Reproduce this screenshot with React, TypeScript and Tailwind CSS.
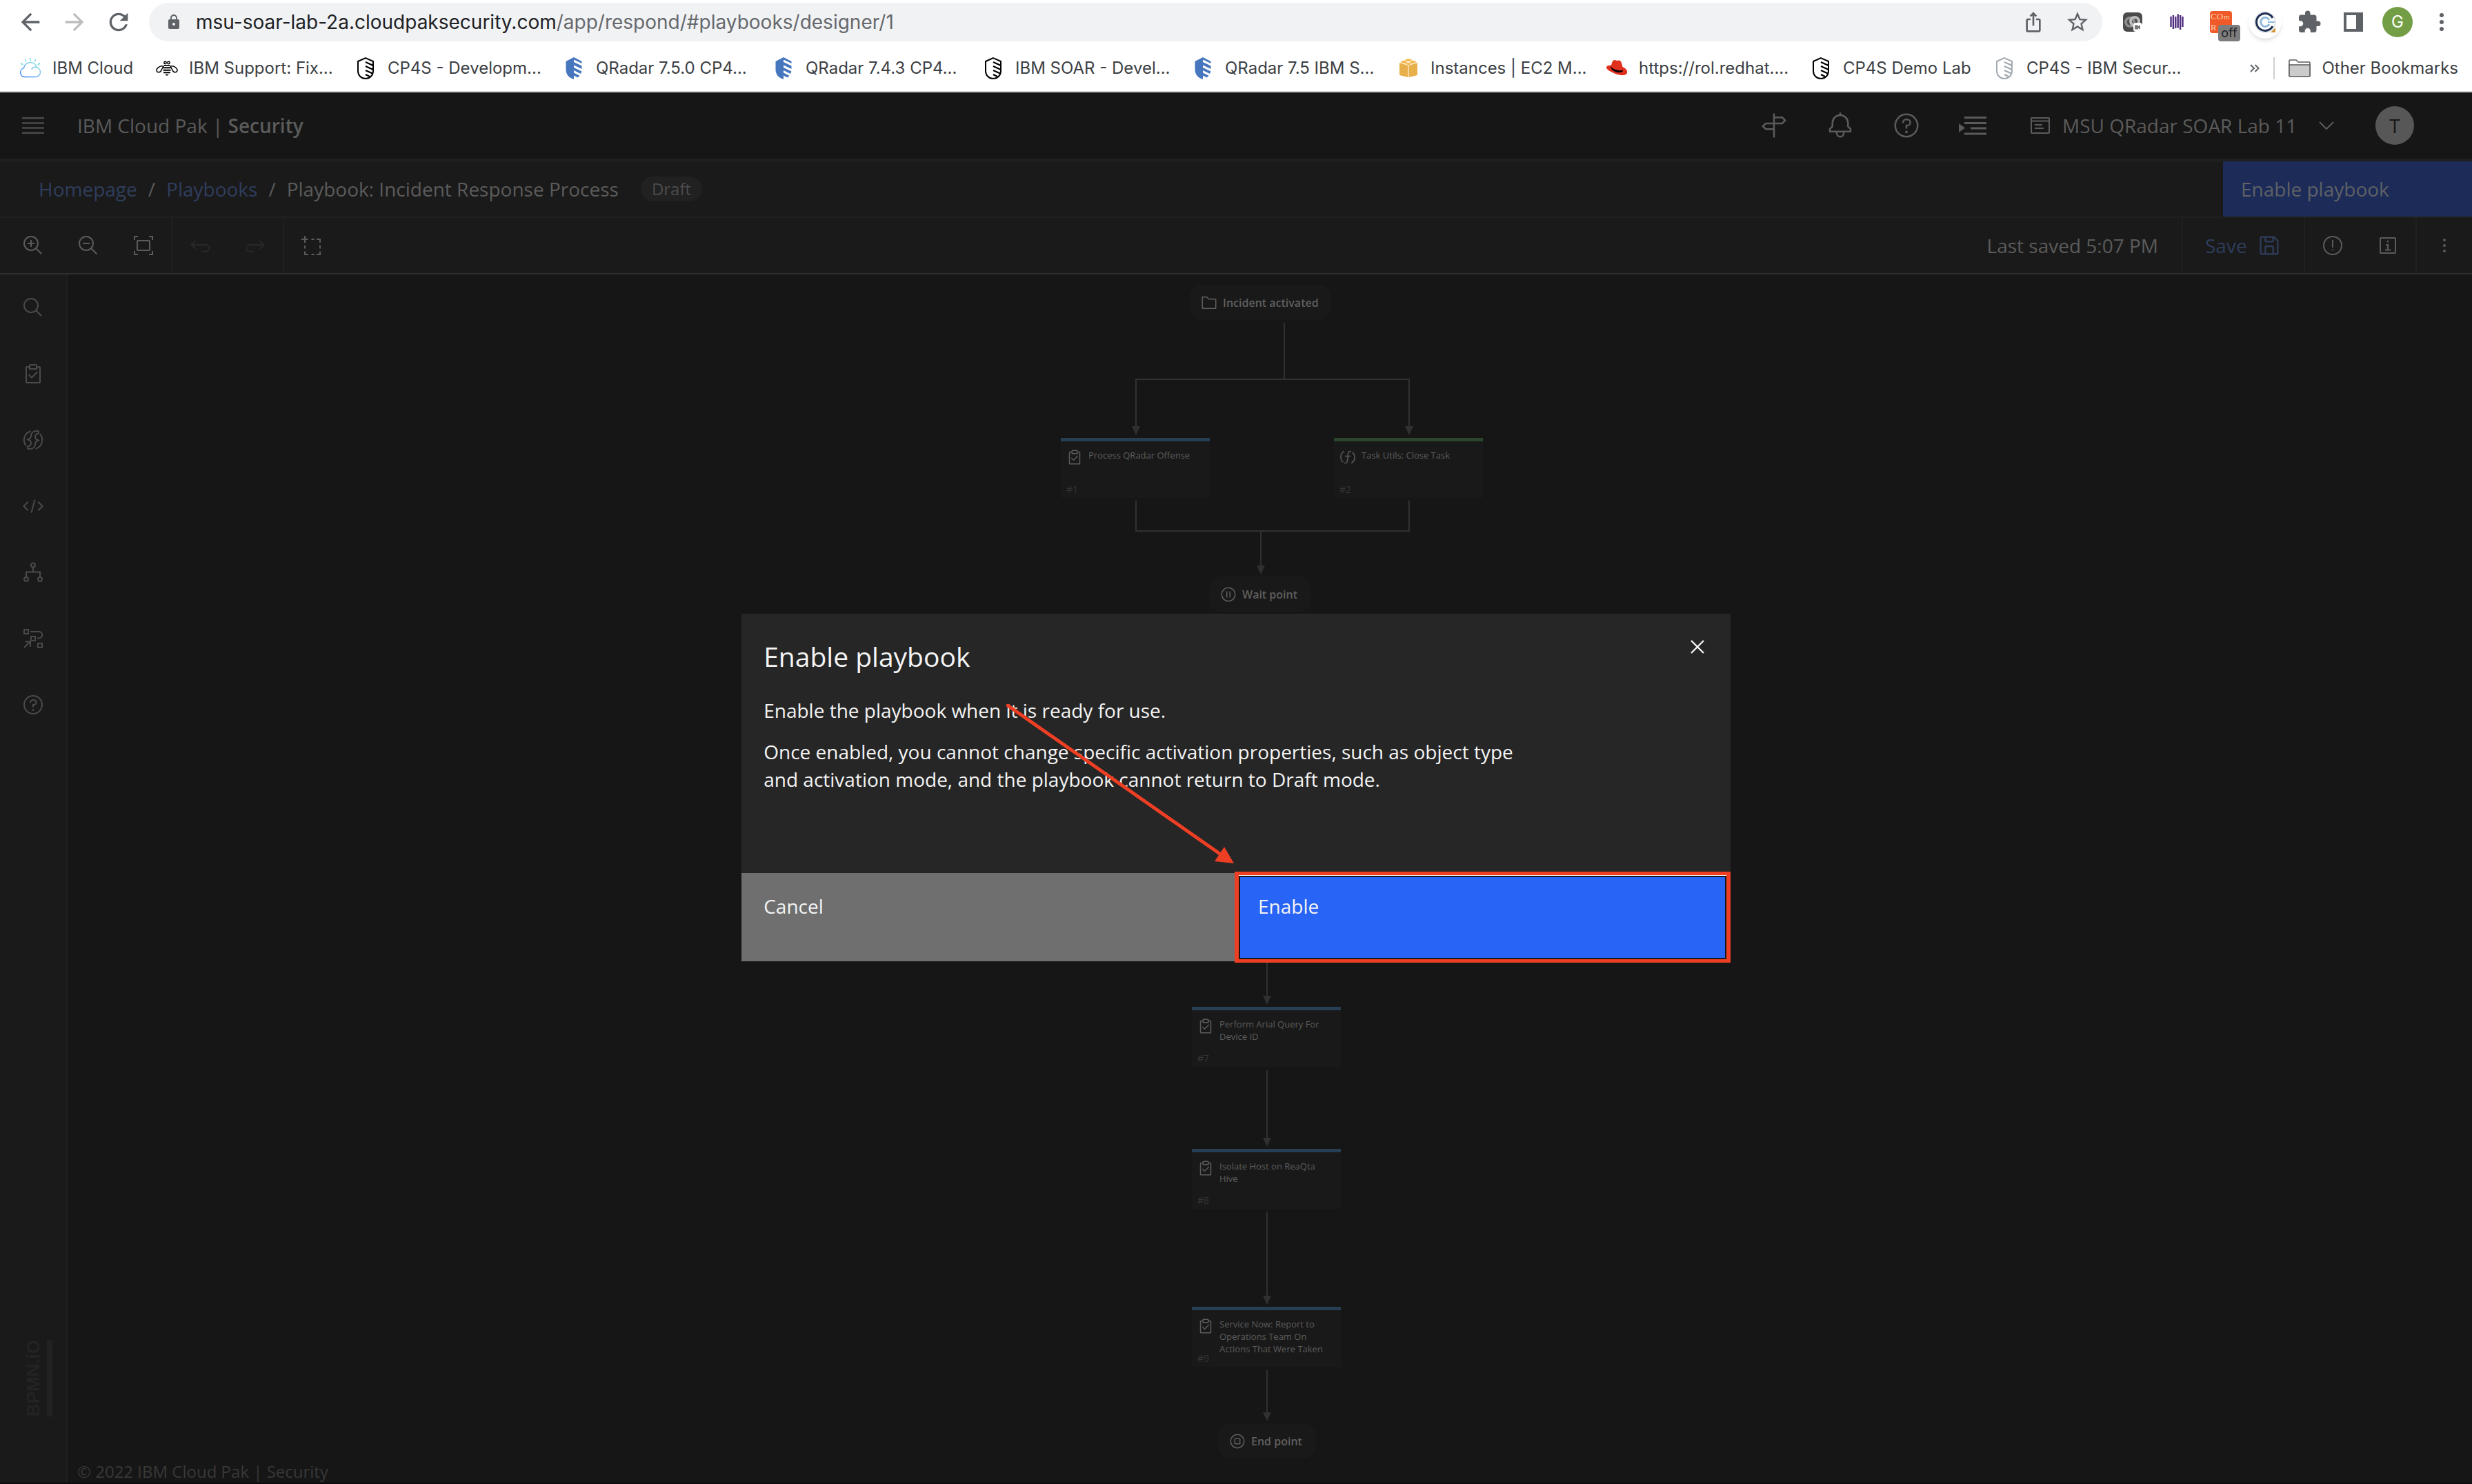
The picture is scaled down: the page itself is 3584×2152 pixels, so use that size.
import React from "react";
import {
  MdArrowBack,
  MdArrowForward,
  MdExtension,
  MdIosShare,
  MdLock,
  MdRefresh,
  MdStarBorder,
} from "react-icons/md";

/* ---------- Icons ---------- */

type IconProps = { className?: string; children?: React.ReactNode; box?: string };

function Solid({ className = "size-8", children, box = "0 0 32 32" }: IconProps) {
  return (
    <svg viewBox={box} fill="currentColor" className={className} aria-hidden="true">
      {children}
    </svg>
  );
}

function Line({ className = "size-8", children, box = "0 0 32 32" }: IconProps) {
  return (
    <svg viewBox={box} fill="none" stroke="currentColor" strokeWidth="2" className={className} aria-hidden="true">
      {children}
    </svg>
  );
}

const SearchIcon = () => (
  <Solid>
    <path d="M29,27.586l-7.552-7.552a11.018,11.018,0,1,0-1.414,1.414L27.586,29ZM4,13a9,9,0,1,1,9,9A9.01,9.01,0,0,1,4,13Z" />
  </Solid>
);

const ZoomIcon = ({ plus }: { plus?: boolean }) => (
  <Solid>
    <path d={plus ? "M18 12h-4V8h-2v4H8v2h4v4h2v-4h4z" : "M8 12h10v2H8z"} />
    <path d="M21.448,20A10.856,10.856,0,0,0,24,13,11,11,0,1,0,13,24a10.856,10.856,0,0,0,7-2.552L27.586,29,29,27.586ZM13,22a9,9,0,1,1,9-9A9.01,9.01,0,0,1,13,22Z" />
  </Solid>
);

const FitIcon = () => (
  <Line>
    <rect x="7" y="9" width="18" height="14" rx="1" />
    <path d="M3 8V3h5M24 3h5v5M29 24v5h-5M8 29H3v-5" />
  </Line>
);

const UndoIcon = ({ className = "size-8" }: { className?: string }) => (
  <Line className={className}>
    <path d="M4 15h20.500a4.800 4.800 0 0 1 0 9.700H18M9.500 9l-6 6 6 6" />
  </Line>
);

const MarqueeIcon = () => (
  <Line>
    <path d="M6 2v10M1 7h9.500M15.500 7h4M23 7h5v5M28 16v4.500M28 24.500V29h-5M19.500 29h-4M11 29H6v-4.500M6 20.500V16" />
  </Line>
);

const TaskIcon = ({ className = "size-8" }: { className?: string }) => (
  <Solid className={className}>
    <path d="M14,20.180l-3.590-3.590L9,18l5,5,9-9-1.410-1.420Z" />
    <path d="M25,5H22V4a2,2,0,0,0-2-2H12a2,2,0,0,0-2,2V5H7A2,2,0,0,0,5,7V28a2,2,0,0,0,2,2H25a2,2,0,0,0,2-2V7A2,2,0,0,0,25,5ZM12,4h8V8H12ZM25,28H7V7h3v3H22V7h3Z" />
  </Solid>
);

const FunctionsIcon = () => (
  <Line>
    <path d="M12.500 3.200A13.200 13.200 0 0 0 6 24.500M19.500 28.800A13.200 13.200 0 0 0 26 7.500" />
    <path d="M24 3h-3c-5 0-8 3-8 7 0 2.500-1.500 4-4.500 5.500C11.500 16.500 13 17.500 13 20c0 3-1.500 5-5 5.500V29" />
    <path d="M8 29h3c5 0 8-3 8-7 0-2.500 1.500-4 4.500-5.500C20.500 15.500 19 14.500 19 12c0-3 1.500-5 5-5.500V3" />
  </Line>
);

const FunctionIcon = ({ className }: { className: string }) => (
  <Line className={className}>
    <path d="M9 4.500a13 13 0 0 0-2 21M23 27.500a13 13 0 0 0 2-21M22.500 5H20a3 3 0 0 0-3 2.700l-2 17a3 3 0 0 1-3 2.600H9.500M11 14h10" />
  </Line>
);

const CodeIcon = () => (
  <Line>
    <path d="M23.300 9.700 29.600 16l-6.300 6.300M8.700 9.700 2.400 16l6.300 6.300M18.600 6.500l-5.200 19" />
  </Line>
);

const BranchIcon = () => (
  <Line>
    <circle cx="16" cy="5.500" r="3" />
    <circle cx="6" cy="26" r="3" />
    <circle cx="26" cy="26" r="3" />
    <path d="M16 8.500V15M6 23v-7.500h20V23" />
  </Line>
);

const FlowIcon = () => (
  <Line>
    <path d="M3 3h6v6H3zM13 13h6v6h-6zM23 23h6v6h-6zM12 6h12.500a4.700 4.700 0 0 1 0 9.500H22M3 29l9-8.500M4.500 20.500H12V28" />
  </Line>
);

const HelpIcon = ({ className = "size-8" }: { className?: string }) => (
  <Solid className={className}>
    <path d="M16,2A14,14,0,1,0,30,16,14,14,0,0,0,16,2Zm0,26A12,12,0,1,1,28,16,12,12,0,0,1,16,28Z" />
    <circle cx="16" cy="23.500" r="1.500" />
    <path d="M17,8H15.500A4.490,4.490,0,0,0,11,12.500V13h2v-.5A2.500,2.500,0,0,1,15.500,10H17a2.500,2.500,0,0,1,0,5H15v4.500h2V17a4.500,4.500,0,0,0,0-9Z" />
  </Solid>
);

const SignpostIcon = () => (
  <Line className="size-10">
    <path d="M16 2v28M16 6.500h9.500l3.500 3.500-3.500 3.500H6.500L3 16.800l3.500 3.400H16" />
  </Line>
);

const BellIcon = () => (
  <Solid className="size-10">
    <path d="M28.707,19.293,26,16.586V13a10.014,10.014,0,0,0-9-9.949V1H15V3.051A10.014,10.014,0,0,0,6,13v3.586L3.293,19.293A1,1,0,0,0,3,20v3a1,1,0,0,0,1,1h7v.777a5.152,5.152,0,0,0,4.500,5.199A5.006,5.006,0,0,0,21,25V24h7a1,1,0,0,0,1-1V20A1,1,0,0,0,28.707,19.293ZM19,25a3,3,0,0,1-6,0V24h6Zm8-3H5V20.414L7.707,17.707A1,1,0,0,0,8,17V13a8,8,0,0,1,16,0v4a1,1,0,0,0,.293.707L27,20.414Z" />
  </Solid>
);

const ActivityIcon = () => (
  <Solid className="size-10" box="0 0 40 40">
    <path d="M8 7h32v3H8zM8 15h32v3H8zM17 22.500h23v3H17zM8 30.500h32v3H8zM0 17l9 6.500L0 30z" />
  </Solid>
);

const AccountIcon = () => (
  <Line className="h-6 w-7" box="0 0 28 24">
    <rect x="1" y="1" width="26" height="22" rx="1" />
    <path d="M1 5.500h26M6 11h11M6 16h13" />
  </Line>
);

const SaveIcon = () => (
  <Solid className="size-9">
    <path d="M27.710,9.290l-5-5A1,1,0,0,0,22,4H6A2,2,0,0,0,4,6V26a2,2,0,0,0,2,2H26a2,2,0,0,0,2-2V10A1,1,0,0,0,27.710,9.290ZM12,6h8v4H12Zm8,20H12V18h8Zm2,0V18a2,2,0,0,0-2-2H12a2,2,0,0,0-2,2v8H6V6h4v4a2,2,0,0,0,2,2h8a2,2,0,0,0,2-2V6.410l4,4V26Z" />
  </Solid>
);

const WarningIcon = () => (
  <Line>
    <circle cx="16" cy="16" r="13" />
    <path d="M16 8v11" />
    <circle cx="16" cy="22.500" r="1" fill="currentColor" stroke="none" />
  </Line>
);

const InfoIcon = () => (
  <Line>
    <rect x="5" y="5" width="22" height="22" rx="1" />
    <path d="M13 15h3v7M12 22.500h8" />
    <circle cx="16" cy="10" r="1.500" fill="currentColor" stroke="none" />
  </Line>
);

const DotsIcon = ({ className, r }: { className: string; r: number }) => (
  <Solid className={className}>
    <circle cx="16" cy="8" r={r} />
    <circle cx="16" cy="16" r={r} />
    <circle cx="16" cy="24" r={r} />
  </Solid>
);

const FolderIcon = ({ className }: { className: string }) => (
  <Line className={className}>
    <path d="M3 5h8.500l4 4H28a1 1 0 0 1 1 1v16a1 1 0 0 1-1 1H4a1 1 0 0 1-1-1z" />
  </Line>
);

const PauseIcon = ({ className }: { className: string }) => (
  <Line className={className}>
    <circle cx="16" cy="16" r="13" />
    <path d="M13 10v12M19 10v12" />
  </Line>
);

const StopIcon = ({ className }: { className: string }) => (
  <Line className={className}>
    <circle cx="16" cy="16" r="13" />
    <rect x="11" y="11" width="10" height="10" rx="1" />
  </Line>
);

/* ---------- Bookmark favicons ---------- */

const OutlineShield = ({ muted }: { muted?: boolean }) => (
  <svg viewBox="0 0 32 32" fill="none" stroke={muted ? "#a2a9b0" : "#000"} strokeWidth="2" className="size-8" aria-hidden="true">
    <path d="M16 1.200 27 6v14c0 6-4.500 11-11 11S5 26 5 20V6z" />
    <path d="M16 7l11 5M16 13l11 5M16 19l10 4.500M16 25l6 3" strokeWidth="2.400" />
  </svg>
);

const BlueShield = () => (
  <svg viewBox="0 0 32 32" className="size-8" aria-hidden="true">
    <path d="M16 0v32C9 30 4.500 25 4.500 18V6z" fill="#4676bd" />
    <path
      d="M16 0l11.500 6v3L16 3.500zM16 7l11.500 5.500V17L16 11.500zM16 15l11.500 5.500L26 24l-10-5zM16 22.500l8.500 4.200-3 2.800-5.500-3z"
      fill="#4676bd"
    />
  </svg>
);

const CloudFavicon = () => (
  <svg viewBox="0 0 32 32" fill="none" strokeWidth="1.500" strokeLinecap="round" className="size-8" aria-hidden="true">
    <defs>
      <linearGradient id="sky" x1="0" y1="1" x2="1" y2="0">
        <stop offset="0" stopColor="#3b7cff" />
        <stop offset=".6" stopColor="#7cc4ef" />
        <stop offset="1" stopColor="#8ff0e0" />
      </linearGradient>
    </defs>
    <path d="M8 28.500a6.500 6.500 0 0 1-1.500-12.800C7 11 11 7.500 16 7.500c5 0 8.500 3.500 9.300 7.500 3 .5 5.200 3.200 5.200 6.500 0 4-3 7-7 7zM18 17c2-3 5-3 7-2" stroke="url(#sky)" />
    <path d="M16 1.500v3M8.500 3.500l1.200 2.500M23.500 3.500 22.300 6M2.500 9l2.300 1.500M29.500 9l-2.300 1.500" stroke="#74dce4" />
  </svg>
);

const BeeFavicon = () => (
  <svg viewBox="0 0 32 32" className="size-8" aria-hidden="true">
    <g fill="none" stroke="#000" strokeWidth="1.500">
      <circle cx="13.500" cy="8" r="1.700" />
      <circle cx="18.500" cy="8" r="1.700" />
      <path d="M11 13C6 12 1 15.500 1 19c0 4 6 3.500 7-.5zM21 13c5-1 10 2.500 10 6 0 4-6 3.500-7-.5z" />
    </g>
    <path d="M12 11h8v1.800h-8zM10.500 14.200h11v2h-11zM10.500 17.700h11v2h-11zM11 21.200h10v2H11zM13 24.700h6L16 27z" fill="#000" />
  </svg>
);

const BoxFavicon = () => (
  <svg viewBox="0 0 32 32" className="size-8" aria-hidden="true">
    <path d="M3 8l12.500 4v17L3 26zM29 8l-12.500 4v17L29 26z" fill="#e8b04a" />
    <path d="M16 2l6 2-6 2.200L10 4zM9 4.500 15 7l-4 2.500L4 7zM23 4.500 17 7l4 2.500L28 7zM16 7.500l4.500 2.200L16 11.500l-4.500-1.800z" fill="#f2b84b" />
  </svg>
);

const HatFavicon = () => (
  <svg viewBox="0 0 32 32" className="size-8" aria-hidden="true">
    <path d="M8 12c1-5 2.500-8 5-8 1.500 0 2 1 3.500 1s2-.8 3.500-.3c2.500.8 3.500 4.800 4.500 9.300 4 1.500 7.500 5 6.500 8.500-1 4-8 4.500-14 2.500S.5 18.500 1 14.500C1.300 12.300 4.500 11.500 8 12z" fill="#e0301e" />
    <path d="M7.800 12.500c-.5 2 3 4.500 8 6 4 1.200 8 1 8.800-.5l.2 2c-1 2.500-6 2.500-10 1.200-5-1.700-8.500-5-7-8.700z" fill="#000" />
  </svg>
);

/* ---------- Browser chrome ---------- */

const bookmarks: { label: string; width: string; icon: React.ReactNode }[] = [
  { label: "IBM Cloud", width: "w-[198px]", icon: <CloudFavicon /> },
  { label: "IBM Support: Fix...", width: "w-[288px]", icon: <BeeFavicon /> },
  { label: "CP4S - Developm...", width: "w-[302px]", icon: <OutlineShield /> },
  { label: "QRadar 7.5.0 CP4...", width: "w-[304px]", icon: <BlueShield /> },
  { label: "QRadar 7.4.3 CP4...", width: "w-[304px]", icon: <BlueShield /> },
  { label: "IBM SOAR - Devel...", width: "w-[304px]", icon: <OutlineShield /> },
  { label: "QRadar 7.5 IBM S...", width: "w-[298px]", icon: <BlueShield /> },
  { label: "Instances | EC2 M...", width: "w-[302px]", icon: <BoxFavicon /> },
  { label: "https://rol.redhat....", width: "w-[296px]", icon: <HatFavicon /> },
  { label: "CP4S Demo Lab", width: "w-[266px]", icon: <OutlineShield /> },
  { label: "CP4S - IBM Secur...", width: "w-[280px]", icon: <OutlineShield muted /> },
];

function ExtensionButton({ label, children }: { label: string; children: React.ReactNode }) {
  return (
    <button type="button" aria-label={label} className="relative flex h-16 w-16 items-center justify-center">
      {children}
    </button>
  );
}

function BrowserChrome() {
  return (
    <div className="border-b-2 border-[#d3d3d3] bg-white font-['Inter',sans-serif]">
      <div className="flex h-16 items-center pr-3">
        <button type="button" aria-label="Back" className="ml-3 flex size-16 items-center justify-center text-[#5f6368]">
          <MdArrowBack className="size-10" />
        </button>
        <button type="button" aria-label="Forward" className="flex size-16 items-center justify-center text-[#bdbdbd]">
          <MdArrowForward className="size-10" />
        </button>
        <button type="button" aria-label="Reload" className="flex size-16 items-center justify-center text-[#5f6368]">
          <MdRefresh className="size-10" />
        </button>
        <div className="ml-3 flex h-14 flex-1 items-center rounded-full bg-[#f1f2f4] pr-1 pl-6 text-[#5f6368]">
          <MdLock className="size-6" />
          <div
            role="textbox"
            aria-label="Address and search bar"
            contentEditable
            suppressContentEditableWarning
            spellCheck={false}
            className="ml-5 flex-1 text-[28px] leading-10 whitespace-nowrap text-[#66696d]"
          >
            <span className="text-[#202124]">msu-soar-lab-2a.cloudpaksecurity.com</span>
            /app/respond/#playbooks/designer/1
          </div>
          <button type="button" aria-label="Share this page" className="flex w-16 justify-center">
            <MdIosShare className="size-8" />
          </button>
          <button type="button" aria-label="Bookmark this page" className="flex w-16 justify-center">
            <MdStarBorder className="size-9" />
          </button>
        </div>
        <div className="ml-3 flex items-center text-[#5f6368]">
          <ExtensionButton label="Screen recorder">
            <svg viewBox="0 0 28 28" className="size-7" aria-hidden="true">
              <rect width="28" height="28" rx="6" fill="#4b4b4b" />
              <circle cx="10" cy="14" r="6" fill="none" stroke="#8d8d8d" strokeWidth="4" />
              <circle cx="17" cy="13" r="6" fill="none" stroke="#bdbdbd" strokeWidth="4" />
              <rect x="15" y="15" width="13" height="13" rx="4" fill="#fff" />
              <path d="M17 18.500h5v1.500l3-1.500v6L22 23v1.500h-5z" fill="#777" />
            </svg>
          </ExtensionButton>
          <ExtensionButton label="Audio tool">
            <svg viewBox="0 0 20 24" className="h-6 w-5" stroke="#4f2d7f" strokeWidth="2.400" aria-hidden="true">
              <path d="M1.500 4v15M4.900 2v20M8.300 4v17M11.700 .5v20M15.100 2v21M18.500 4v15" />
            </svg>
          </ExtensionButton>
          <ExtensionButton label="Comcor, off">
            <span className="flex size-8 flex-col rounded-sm bg-[#f05a28] text-left font-['Liberation_Serif',serif] text-[#ffd2b5]">
              <span className="flex h-4 items-center gap-px pl-px text-[13px] leading-4">
                CO<span className="text-[11px] leading-3">m</span>
              </span>
              <span className="pl-px text-[13px] leading-4">R</span>
            </span>
            <span className="absolute right-1 bottom-1 flex h-6 w-8 items-center justify-center rounded bg-[#7d7d7d] text-[18px] leading-6 text-[#202124]">
              off
            </span>
          </ExtensionButton>
          <ExtensionButton label="C extension">
            <span className="flex size-12 items-center justify-center rounded-full bg-white shadow-md">
              <svg viewBox="0 0 32 32" className="size-8" fill="none" aria-hidden="true">
                <circle cx="16" cy="16" r="15" stroke="#c9ced6" />
                <path d="M27 10a12.500 12.500 0 1 0 0 12" stroke="#1d2f52" strokeWidth="3" />
                <path d="M22 13a6.500 6.500 0 1 0 0 6" stroke="#8fb8dc" strokeWidth="3" />
                <path d="M20 16h10" stroke="#8fb8dc" strokeWidth="2" />
                <path d="M31 24v7h-7z" fill="#c9973a" />
              </svg>
            </span>
          </ExtensionButton>
          <ExtensionButton label="Extensions">
            <MdExtension className="size-9" />
          </ExtensionButton>
          <ExtensionButton label="Side panel">
            <svg viewBox="0 0 28 28" className="size-7" fill="currentColor" aria-hidden="true">
              <path fillRule="evenodd" d="M0 0h28v28H0zM4 4v20h14V4z" />
            </svg>
          </ExtensionButton>
          <ExtensionButton label="Profile G">
            <span className="flex size-11 items-center justify-center rounded-full bg-[#739e46] text-[24px] leading-8 text-white">G</span>
          </ExtensionButton>
          <ExtensionButton label="Browser menu">
            <DotsIcon className="size-10" r={2.4} />
          </ExtensionButton>
        </div>
      </div>
      <nav aria-label="Bookmarks" className="flex h-[68px] items-center overflow-hidden pt-0.5 pl-7 text-[24px] leading-8 text-[#3c4043]">
        {bookmarks.map((b) => (
          <a key={b.label} href="#bookmark" className={`flex shrink-0 items-center gap-4 whitespace-nowrap ${b.width}`}>
            {b.icon}
            {b.label}
          </a>
        ))}
        <button type="button" aria-label="More bookmarks" className="ml-auto px-5 text-[#5f6368]">
          <svg viewBox="0 0 14 12" className="h-3 w-3.5" fill="none" stroke="currentColor" strokeWidth="2" aria-hidden="true">
            <path d="M1 1l5 5-5 5M7.500 1l5 5-5 5" />
          </svg>
        </button>
        <span className="h-8 w-0.5 bg-[#cfcfcf]" />
        <button type="button" className="mr-5 ml-5 flex items-center gap-4">
          <svg viewBox="0 0 32 32" className="size-8" stroke="#5a5a5a" strokeWidth="1.500" aria-hidden="true">
            <path d="M1 27V5a1 1 0 0 1 1-1h9l3 3h16a1 1 0 0 1 1 1v19z" fill="#fff" />
            <path d="M1 11h30v16a1 1 0 0 1-1 1H2a1 1 0 0 1-1-1z" fill="#cbcbcb" />
          </svg>
          Other Bookmarks
        </button>
      </nav>
    </div>
  );
}

/* ---------- Application header ---------- */

function HeaderButton({ label, children }: { label: string; children: React.ReactNode }) {
  return (
    <button type="button" aria-label={label} className="flex h-24 w-24 items-center justify-center">
      {children}
    </button>
  );
}

function AppHeader() {
  return (
    <header className="flex h-[100px] items-center border-b-4 border-[#1f1f1f] text-[28px] leading-10 text-[#5b5b5b]">
      <button type="button" aria-label="Open menu" className="flex size-24 items-center justify-center text-[#4a4a4a]">
        <Solid className="h-6 w-8" box="0 0 32 24">
          <path d="M0 0h32v2.500H0zM0 7.200h32v2.500H0zM0 14.300h32v2.500H0zM0 21.500h32V24H0z" />
        </Solid>
      </button>
      <a href="#home" className="pl-4">
        IBM Cloud Pak | <span className="font-semibold">Security</span>
      </a>
      <div className="ml-auto flex items-center">
        <HeaderButton label="Getting started"><SignpostIcon /></HeaderButton>
        <HeaderButton label="Notifications"><BellIcon /></HeaderButton>
        <HeaderButton label="Help"><HelpIcon className="size-10" /></HeaderButton>
        <HeaderButton label="Activity"><ActivityIcon /></HeaderButton>
        <button type="button" className="flex items-center pl-9">
          <AccountIcon />
          <span className="w-[390px] pl-[18px] text-left">MSU QRadar SOAR Lab 11</span>
          <Line className="h-3 w-[22px]" box="0 0 22 12">
            <path d="M1 1l10 10L21 1" />
          </Line>
        </button>
        <button type="button" aria-label="User T" className="mr-[84px] ml-[60px] flex size-14 items-center justify-center rounded-full bg-[#575757] text-[#161616]">
          T
        </button>
      </div>
    </header>
  );
}

function BreadcrumbBar() {
  return (
    <div className="flex h-[82px] items-stretch border-b-2 border-[#202020] bg-[#1a1a1a] text-[28px] leading-10 text-[#5b5b5b]">
      <nav aria-label="Breadcrumb" className="flex items-center gap-4 pl-14">
        <a href="#homepage" className="text-[#2f3d5c]">Homepage</a>
        <span>/</span>
        <a href="#playbooks" className="text-[#2f3d5c]">Playbooks</a>
        <span>/</span>
        <span>Playbook: Incident Response Process</span>
        <span className="ml-4 rounded-full bg-[#212121] px-4 text-[24px] leading-9 text-[#4c4c4c]">Draft</span>
      </nav>
      <button type="button" className="ml-auto w-[361px] bg-[#1c2b57] px-[26px] text-left text-[#5e6166]">Enable playbook</button>
    </div>
  );
}

function ToolButton({ label, muted, children }: { label: string; muted?: boolean; children: React.ReactNode }) {
  return (
    <button
      type="button"
      aria-label={label}
      disabled={muted}
      className={muted ? "flex h-20 w-20 items-center justify-center text-[#282828]" : "flex h-20 w-20 items-center justify-center"}
    >
      {children}
    </button>
  );
}

function Toolbar() {
  return (
    <div className="flex h-[82px] items-center border-b-2 border-[#2e2e2e] bg-[#1a1a1a] text-[28px] leading-10 text-[#5b5b5b]">
      <div className="flex border-r-2 border-[#202020] pl-2">
        <ToolButton label="Zoom in"><ZoomIcon plus /></ToolButton>
        <ToolButton label="Zoom out"><ZoomIcon /></ToolButton>
        <ToolButton label="Fit to screen"><FitIcon /></ToolButton>
      </div>
      <div className="flex border-r-2 border-[#202020]">
        <ToolButton label="Undo" muted><UndoIcon /></ToolButton>
        <ToolButton label="Redo" muted><UndoIcon className="size-8 -scale-x-100" /></ToolButton>
      </div>
      <ToolButton label="Select area"><MarqueeIcon /></ToolButton>
      <p className="ml-auto pr-[34px]">Last saved 5:07 PM</p>
      <button type="button" className="flex h-20 w-[179px] items-center gap-3.5 border-x-2 border-[#202020] pl-8 text-[#2f3d5c]">
        Save
        <SaveIcon />
      </button>
      <ToolButton label="Issues"><WarningIcon /></ToolButton>
      <ToolButton label="Details"><InfoIcon /></ToolButton>
      <div className="border-l-2 border-[#202020]">
        <ToolButton label="More options"><DotsIcon className="size-8" r={2} /></ToolButton>
      </div>
    </div>
  );
}

function SidePalette() {
  const tools: [string, React.ReactNode][] = [
    ["Search", <SearchIcon />],
    ["Tasks", <TaskIcon />],
    ["Functions", <FunctionsIcon />],
    ["Scripts", <CodeIcon />],
    ["Decision points", <BranchIcon />],
    ["Sub-playbooks", <FlowIcon />],
    ["Help", <HelpIcon />],
  ];
  return (
    <aside className="flex w-[98px] shrink-0 flex-col border-r-2 border-[#1f1f1f] bg-[#1a1a1a] text-[#4a4a4a]">
      {tools.map(([label, icon]) => (
        <button key={label} type="button" aria-label={label} className="flex h-24 items-center justify-center">
          {icon}
        </button>
      ))}
      <a
        href="#bpmn"
        className="mt-auto mb-24 ml-7 rotate-180 self-start border-l-8 border-[#222] font-['Liberation_Sans',sans-serif] text-[26px] leading-10 font-bold text-[#232323] [writing-mode:vertical-rl]"
      >
        BPMN.iO
      </a>
    </aside>
  );
}

/* ---------- Playbook diagram ---------- */

function PointNode({ place, icon, label }: { place: string; icon: React.ReactNode; label: string }) {
  return (
    <div className={`absolute flex h-[51px] items-center gap-2 rounded-[18px] bg-[#191919] px-4 text-[16px] leading-6 font-semibold whitespace-nowrap text-[#5f5f5f] ${place}`}>
      {icon}
      {label}
    </div>
  );
}

function StepNode({ place, accent, icon, label, id }: { place: string; accent: string; icon: React.ReactNode; label: string; id: string }) {
  return (
    <div className={`absolute flex h-[87px] w-[216px] gap-2 border-t-[5px] bg-[#191919] pt-[11px] pl-2 ${accent} ${place}`}>
      <span className="text-[#5c5c5c]">{icon}</span>
      <p className="w-[168px] text-[13px] leading-[18px] text-[#5c5c5c]">{label}</p>
      <span className="absolute bottom-1 left-2 text-[14px] leading-4 text-[#343434]">{id}</span>
    </div>
  );
}

function Diagram() {
  const task = <TaskIcon className="size-6" />;
  return (
    <div className="relative w-[616px]">
      <svg viewBox="0 0 616 1750" className="absolute top-0 left-0 h-[1750px] w-[616px]" fill="none" stroke="#303030" strokeWidth="2" aria-hidden="true">
        <path d="M329 70v82M114 222v-70h396v70M114 328v44h396v-44M295 372v52M304 990v58M304 1154v100M304 1360v124M304 1589v64" />
        <path
          d="M108 220h12l-6 13zM504 220h12l-6 13zM289 422h12l-6 13zM298 1046h12l-6 13zM298 1252h12l-6 13zM298 1481h12l-6 13zM298 1650h12l-6 13z"
          fill="#303030"
          stroke="none"
        />
      </svg>
      <PointNode place="top-[15px] left-[192px] w-[205px]" icon={<FolderIcon className="size-6" />} label="Incident activated" />
      <StepNode place="top-[237px] left-[5px]" accent="border-[#263f54]" icon={task} label="Process QRadar Offense" id="#1" />
      <StepNode place="top-[237px] left-[401px]" accent="border-[#2c452d]" icon={<FunctionIcon className="size-6" />} label="Task Utils: Close Task" id="#2" />
      <PointNode place="top-[438px] left-[220px] w-[148px]" icon={<PauseIcon className="size-6" />} label="Wait point" />
      <StepNode place="top-[1062px] left-[195px]" accent="border-[#263f54]" icon={task} label="Perform Arial Query For Device ID" id="#7" />
      <StepNode place="top-[1268px] left-[195px]" accent="border-[#263f54]" icon={task} label="Isolate Host on ReaQta Hive" id="#8" />
      <StepNode place="top-[1497px] left-[195px]" accent="border-[#263f54]" icon={task} label="Service Now: Report to Operations Team On Actions That Were Taken" id="#9" />
      <PointNode place="top-[1666px] left-[233px] w-[142px]" icon={<StopIcon className="size-6" />} label="End point" />
    </div>
  );
}

/* ---------- Dialog ---------- */

function EnableDialog() {
  return (
    <div className="absolute inset-0 flex items-center justify-center">
      <section role="dialog" aria-modal="true" aria-labelledby="dialog-title" className="relative w-[40%] bg-[#262626] text-[28px] leading-10 text-[#f4f4f4]">
        <div className="flex items-start justify-between pt-8 pr-8 pl-8">
          <h2 id="dialog-title" className="text-[39px] leading-[60px]">Enable playbook</h2>
          <button type="button" aria-label="Close" className="flex size-8 items-center justify-center">
            <Line className="size-5" box="0 0 20 20">
              <path d="M1 1l18 18M19 1L1 19" strokeWidth="2.400" />
            </Line>
          </button>
        </div>
        <div className="px-8 pt-7 pb-[116px]">
          <p>Enable the playbook when it is ready for use.</p>
          <p className="mt-5 max-w-[1120px]">
            Once enabled, you cannot change specific activation properties, such as object type and activation mode, and the playbook cannot return to Draft mode.
          </p>
        </div>
        <div className="flex h-32 items-stretch">
          <button type="button" className="flex flex-1 items-start bg-[#6f6f6f] px-8 pt-7">Cancel</button>
          <button type="button" className="relative flex flex-1 items-start bg-[#2864f6] px-8 pt-7">
            Enable
            <span className="absolute -top-0.5 right-0 -bottom-0.5 -left-0.5 border-x-[6px] border-y-[5px] border-[#ee3f24]">
              <span className="block h-full border-t border-white">
                <span className="block h-full border-2 border-[#161616]" />
              </span>
            </span>
          </button>
        </div>
        <svg viewBox="0 0 332 234" className="absolute top-[131px] left-[384px] h-[234px] w-[332px]" aria-hidden="true">
          <path d="M2 2l316 221" stroke="#ee3f24" strokeWidth="5" strokeLinecap="round" />
          <path d="M330 231l-28-3 14-21z" fill="#ee3f24" />
        </svg>
      </section>
    </div>
  );
}

export default function App() {
  return (
    <div className="flex min-h-screen flex-col bg-[#161616]">
      <BrowserChrome />
      <div className="relative flex flex-1 flex-col border-b-2 border-[#0e0a10] font-['Open_Sans',sans-serif]">
        <AppHeader />
        <BreadcrumbBar />
        <Toolbar />
        <div className="flex flex-1">
          <SidePalette />
          <main className="relative flex flex-1 justify-center">
            <Diagram />
            <footer className="absolute bottom-0 left-3.5 text-[24px] leading-8 text-[#383838]">© 2022 IBM Cloud Pak | Security</footer>
          </main>
        </div>
        <EnableDialog />
      </div>
    </div>
  );
}
